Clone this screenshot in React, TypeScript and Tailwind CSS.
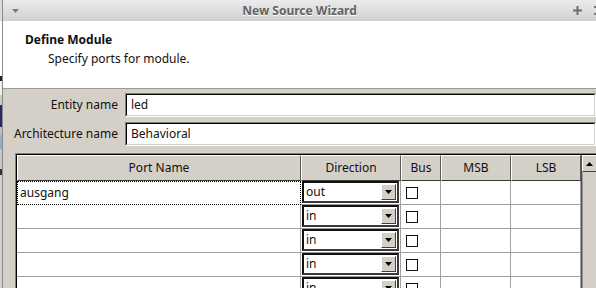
import React from "react";

function ComboBox({ value }: { value: string }) {
  return (
    <div className="ml-[1px] h-[22px] w-[97px] border-2 border-t-[#111] border-l-[#111] border-r-[#3a3a3a] border-b-[#3a3a3a] bg-white flex items-stretch">
      <div className="flex-1 pl-[2px] flex items-center text-[12px] leading-none text-[#111]">{value}</div>
      <div className="w-[15px] my-[1px] mr-[1px] bg-[#d4d0c8] border border-t-white border-l-white border-r-[#404040] border-b-[#404040] flex items-center justify-center">
        <svg width="7" height="4" viewBox="0 0 7 4">
          <polygon points="0,0 7,0 3.5,4" fill="#000" />
        </svg>
      </div>
    </div>
  );
}

function TextInput({ value }: { value: string }) {
  return (
    <div className="flex-1 h-[24px] border border-t-[#808080] border-l-[#808080] border-r-white border-b-white">
      <div className="h-full border border-t-black border-l-black border-r-[#d4d0c8] border-b-[#d4d0c8] bg-white flex items-center pl-[4px] text-[12px] text-[#111]">
        {value}
      </div>
    </div>
  );
}

export default function App() {
  const rows = [
    { name: "ausgang", dir: "out", focus: true },
    { name: "", dir: "in", focus: false },
    { name: "", dir: "in", focus: false },
    { name: "", dir: "in", focus: false },
    { name: "", dir: "in", focus: false },
  ];
  const headers = ["Port Name", "Direction", "Bus", "MSB", "LSB"];
  return (
    <div className="w-[596px] h-[288px] overflow-hidden flex bg-[#d4d0c8] font-['Noto_Sans',sans-serif] text-[#111]">
      {/* background window sliver */}
      <div className="w-[2px] shrink-0 flex flex-col">
        <div className="h-[21px] shrink-0 bg-[#dadada]" />
        <div className="h-[55px] shrink-0 bg-white" />
        <div className="h-[5px] shrink-0 bg-[#222]" />
        <div className="h-[14px] shrink-0 bg-[#f0f0f0]" />
        <div className="h-[10px] shrink-0 bg-[#c9c9c9]" />
        <div className="h-[22px] shrink-0 bg-[#2c2a5a]" />
        <div className="h-[8px] shrink-0 bg-[#bdbdbd]" />
        <div className="h-[14px] shrink-0 bg-[#8fb0c8]" />
        <div className="h-[20px] shrink-0 bg-[#c6c6c6]" />
        <div className="h-[6px] shrink-0 bg-[#333]" />
        <div className="flex-1 bg-[#cfcfcf]" />
      </div>
      <div className="w-px shrink-0 bg-[#8a8a8a]" />
      <div className="flex-1 min-w-0 flex flex-col">
        {/* title bar */}
        <div className="h-[21px] shrink-0 bg-linear-to-b from-[#ebebeb] to-[#d1d1d1] grid grid-cols-[1fr_auto_1fr] items-center">
          <div className="pl-[9px] flex items-center">
            <svg width="7" height="4" viewBox="0 0 7 4">
              <polygon points="0,0 7,0 3.5,4" fill="#7a7a7a" />
            </svg>
          </div>
          <div className="text-[12px] font-bold text-[#636363] [text-shadow:0_1px_0_#ffffff] leading-none">
            New Source Wizard
          </div>
          <div className="flex items-center justify-end gap-[12px]">
            <svg width="9" height="9" viewBox="0 0 9 9">
              <rect x="0" y="3.5" width="9" height="2" fill="#6e6e6e" />
              <rect x="3.5" y="0" width="2" height="9" fill="#6e6e6e" />
            </svg>
            <svg width="2" height="9" viewBox="0 0 2 9">
              <rect x="0" y="0" width="2" height="2" fill="#777" />
              <rect x="0" y="7" width="2" height="2" fill="#777" />
            </svg>
          </div>
        </div>
        {/* header */}
        <div className="h-[68px] shrink-0 bg-white border-b border-[#9a9a9a] pl-[22px] pt-[11px]">
          <div className="text-[12px] font-bold leading-[16px]">Define Module</div>
          <div className="text-[12px] leading-[16px] mt-[3px] pl-[23px]">Specify ports for module.</div>
        </div>
        {/* body */}
        <div className="flex-1 min-h-0 flex flex-col pt-[4px]">
          <div className="flex items-center shrink-0">
            <div className="w-[115px] text-right text-[12px] whitespace-nowrap">Entity name</div>
            <div className="w-[7px]" />
            <TextInput value="led" />
          </div>
          <div className="flex items-center mt-[5px] shrink-0">
            <div className="w-[115px] text-right text-[12px] whitespace-nowrap">Architecture name</div>
            <div className="w-[7px]" />
            <TextInput value="Behavioral" />
          </div>
          {/* table */}
          <div className="ml-[12px] mt-[7px] shrink-0 border-t border-l border-[#808080]">
            <div className="border-t border-l border-black flex">
              <div className="flex flex-col">
                <div className="grid grid-cols-[284px_100px_40px_70px_70px] h-[26px] shrink-0">
                  {headers.map((h) => (
                    <div
                      key={h}
                      className="border border-t-white border-l-white border-r-[#5a5a5a] border-b-[#3a3a3a] flex items-center justify-center text-[12px]"
                    >
                      {h}
                    </div>
                  ))}
                </div>
                {rows.map((r, i) => (
                  <div key={i} className="grid grid-cols-[284px_100px_40px_70px_70px] h-[24px] shrink-0 bg-white">
                    {r.focus ? (
                      <div className="border border-dotted border-black flex items-center pl-[2px] text-[12px]">{r.name}</div>
                    ) : (
                      <div className="border-r border-b border-[#a0a0a0]" />
                    )}
                    <div className="border-r border-b border-[#a0a0a0]">
                      <ComboBox value={r.dir} />
                    </div>
                    <div className="border-r border-b border-[#a0a0a0] flex items-center pl-[5px]">
                      <div className="w-[12px] h-[12px] border border-[#111] bg-white" />
                    </div>
                    <div className="border-r border-b border-[#a0a0a0]" />
                    <div className="border-r border-b border-[#a0a0a0]" />
                  </div>
                ))}
              </div>
              {/* scrollbar */}
              <div className="w-[16px] shrink-0 flex flex-col border-l border-[#505050]">
                <div className="h-[17px] shrink-0 bg-[#d4d0c8] border border-t-white border-l-white border-r-[#404040] border-b-[#404040] flex items-center justify-center">
                  <svg width="7" height="4" viewBox="0 0 7 4">
                    <polygon points="0,4 7,4 3.5,0" fill="#000" />
                  </svg>
                </div>
                <div className="flex-1 bg-[#d4d0c8] border-l border-[#9a9a9a]" />
              </div>
            </div>
          </div>
        </div>
      </div>
    </div>
  );
}
